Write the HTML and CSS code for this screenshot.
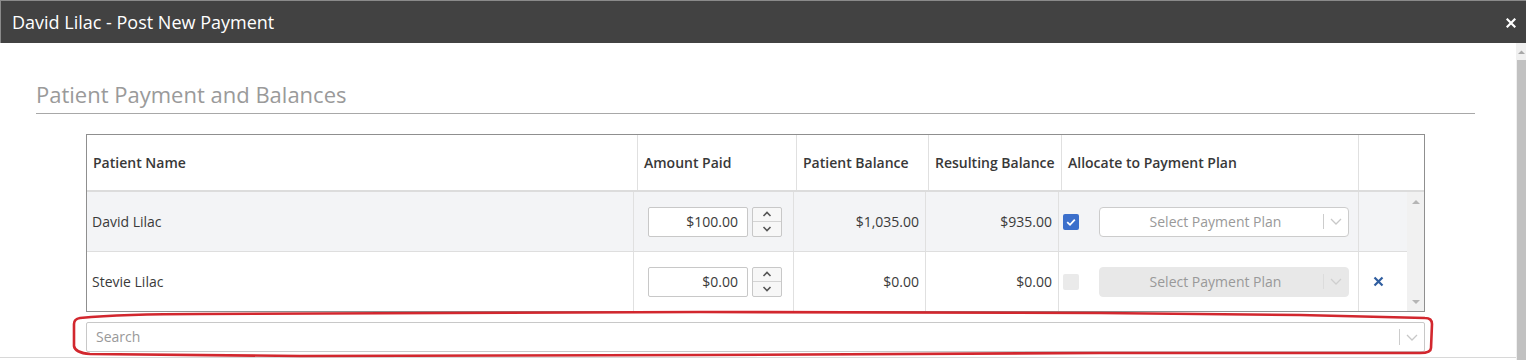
FILE: index.html
```html
<!DOCTYPE html>
<html>
<head>
<meta charset="utf-8">
<link rel="stylesheet" href="styles.css">
</head>
<body>
<div class="dialog">
  <div class="titlebar">
    <span class="title">David Lilac - Post New Payment</span>
    <svg class="close" width="10" height="10" viewBox="0 0 10 10"><path d="M1.5 1.5 L8.5 8.5 M8.5 1.5 L1.5 8.5" stroke="#fff" stroke-width="2.2" stroke-linecap="square"/></svg>
  </div>
  <div class="body-wrap">
    <div class="content">
      <h2 class="section-title">Patient Payment and Balances</h2>
      <div class="section">
        <div class="grid-table">
          <div class="thead">
            <div class="th">Patient Name</div>
            <div class="th">Amount Paid</div>
            <div class="th">Patient Balance</div>
            <div class="th">Resulting Balance</div>
            <div class="th">Allocate to Payment Plan</div>
            <div class="th last"></div>
          </div>
          <div class="tbody">
            <div class="rows">
              <div class="tr alt">
                <div class="td">David Lilac</div>
                <div class="td amount">
                  <div class="num-input">$100.00</div>
                  <div class="spinner">
                    <div class="spin-btn"><svg width="10" height="6" viewBox="0 0 10 6"><path d="M1.5 5 L5 1.5 L8.5 5" fill="none" stroke="#555" stroke-width="1.6"/></svg></div>
                    <div class="spin-btn"><svg width="10" height="6" viewBox="0 0 10 6"><path d="M1.5 1 L5 4.5 L8.5 1" fill="none" stroke="#555" stroke-width="1.6"/></svg></div>
                  </div>
                </div>
                <div class="td money">$1,035.00</div>
                <div class="td money">$935.00</div>
                <div class="td allocate">
                  <div class="checkbox checked"><svg width="16" height="16" viewBox="0 0 16 16"><path d="M4.2 8.2 L7 10.8 L11.8 5.6" fill="none" stroke="#fff" stroke-width="1.8"/></svg></div>
                  <div class="select">
                    <span class="select-label">Select Payment Plan</span>
                    <span class="sep"></span>
                    <span class="chev"><svg width="12" height="7" viewBox="0 0 12 7"><path d="M1 1 L6 6 L11 1" fill="none" stroke="#c8c8c8" stroke-width="1.3"/></svg></span>
                  </div>
                </div>
                <div class="td last"></div>
              </div>
              <div class="tr">
                <div class="td">Stevie Lilac</div>
                <div class="td amount">
                  <div class="num-input">$0.00</div>
                  <div class="spinner">
                    <div class="spin-btn"><svg width="10" height="6" viewBox="0 0 10 6"><path d="M1.5 5 L5 1.5 L8.5 5" fill="none" stroke="#555" stroke-width="1.6"/></svg></div>
                    <div class="spin-btn"><svg width="10" height="6" viewBox="0 0 10 6"><path d="M1.5 1 L5 4.5 L8.5 1" fill="none" stroke="#555" stroke-width="1.6"/></svg></div>
                  </div>
                </div>
                <div class="td money">$0.00</div>
                <div class="td money">$0.00</div>
                <div class="td allocate">
                  <div class="checkbox disabled"></div>
                  <div class="select disabled">
                    <span class="select-label">Select Payment Plan</span>
                    <span class="sep"></span>
                    <span class="chev"><svg width="12" height="7" viewBox="0 0 12 7"><path d="M1 1 L6 6 L11 1" fill="none" stroke="#cfcfcf" stroke-width="1.3"/></svg></span>
                  </div>
                </div>
                <div class="td last remove">
                  <svg width="11" height="11" viewBox="0 0 11 11"><path d="M1.5 1.5 L9.5 9.5 M9.5 1.5 L1.5 9.5" stroke="#2f5d9f" stroke-width="2.2"/></svg>
                </div>
              </div>
            </div>
            <div class="vscroll">
              <svg width="8" height="5" viewBox="0 0 8 5"><path d="M0 5 L4 1 L8 5 Z" fill="#b5b5b5"/></svg>
              <svg width="8" height="5" viewBox="0 0 8 5"><path d="M0 0 L4 4 L8 0 Z" fill="#b5b5b5"/></svg>
            </div>
          </div>
        </div>
        <div class="search-wrap">
          <div class="search">
            <span class="search-label">Search</span>
            <span class="sep"></span>
            <span class="chev"><svg width="12" height="7" viewBox="0 0 12 7"><path d="M1 1 L6 6 L11 1" fill="none" stroke="#c8c8c8" stroke-width="1.3"/></svg></span>
          </div>
          <svg class="marker" width="1364" height="48" viewBox="0 0 1364 48"><path d="M8 6 C40 3 100 2 128 2 L628 0 L1028 1 L1228 3 L1353 6 Q1360 6 1360 12 L1359 36 Q1359 41 1348 41 L1028 41 L628 43 L228 44 L18 42 Q3 41 2 34 L2 12 Q2 7 8 6 Z" fill="none" stroke="#d2272e" stroke-width="2.6" stroke-linejoin="round"/></svg>
        </div>
      </div>
      <div class="footer-line"></div>
    </div>
    <div class="page-scroll">
      <div class="ps-arrow"><svg width="7" height="4" viewBox="0 0 7 4"><path d="M0 4 L3.5 0.5 L7 4 Z" fill="#a8a8a8"/></svg></div>
      <div class="ps-thumb"></div>
    </div>
  </div>
</div>
</body>
</html>
```

FILE: styles.css
```css
* { box-sizing: border-box; }
html, body { margin: 0; padding: 0; }
body {
  font-family: "Open Sans", "Liberation Sans", sans-serif;
  color: #333;
  background: #fff;
  width: 1526px;
  height: 360px;
  overflow: hidden;
}
.dialog {
  display: flex;
  flex-direction: column;
  height: 360px;
}
.titlebar {
  height: 43px;
  background: #424242;
  border-top: 1px solid #8a8a8a;
  border-left: 1px solid #8a8a8a;
  display: flex;
  align-items: center;
  justify-content: space-between;
  padding: 0 10px 0 11px;
}
.title {
  color: #fff;
  font-size: 18px;
  line-height: 42px;
}
.close { display: block; margin-top: 2px; }
.body-wrap {
  flex: 1;
  display: flex;
  min-height: 0;
}
.content {
  flex: 1;
  padding: 0 41px 0 36px;
  display: flex;
  flex-direction: column;
}
.section-title {
  margin: 37px 0 0 0;
  font-size: 22px;
  font-weight: 400;
  line-height: 29px;
  color: #9a9a9a;
  padding-bottom: 4px;
  border-bottom: 1px solid #a8a8a8;
}
.section {
  margin: 20px 50px 0 50px;
}
.grid-table {
  border: 1px solid #8f8f8f;
  border-bottom: 1px solid #8f8f8f;
}
.thead {
  display: grid;
  grid-template-columns: 551px 159px 132px 133px 297px 65px;
  height: 57px;
  border-bottom: 2px solid #dcdcdc;
}
.th {
  display: flex;
  align-items: center;
  padding: 0 6px;
  font-size: 14px;
  font-weight: 600;
  color: #383838;
  border-right: 1px solid #e0e0e0;
}
.th.last { border-right: none; }
.tbody {
  display: flex;
}
.rows { flex: 1; }
.tr {
  display: grid;
  grid-template-columns: 547px 160px 132px 133px 300px 48px;
  height: 60px;
  border-bottom: 1px solid #dedede;
  background: #fff;
}
.tr:last-child { border-bottom: none; height: 59px; }
.tr.alt { background: #f3f4f6; }
.td {
  display: flex;
  align-items: center;
  padding: 0 6px 1px 6px;
  font-size: 14px;
  color: #3a3a3a;
  border-right: 1px solid #e0e0e0;
}
.td:first-child { padding-left: 5px; }
.td.last { border-right: none; }
.td.money { justify-content: flex-end; }
.td.amount { padding: 0 0 0 14px; gap: 4px; }
.num-input {
  width: 100px;
  height: 30px;
  border: 1px solid #c8c8c8;
  border-radius: 2px;
  background: #fff;
  display: flex;
  align-items: center;
  justify-content: flex-end;
  padding: 0 9px 1px 0;
  font-size: 14px;
  color: #3a3a3a;
}
.spinner {
  width: 30px;
  height: 30px;
  border: 1px solid #c8c8c8;
  border-radius: 2px;
  background: #f7f7f7;
  display: flex;
  flex-direction: column;
}
.spin-btn {
  flex: 1;
  display: flex;
  align-items: center;
  justify-content: center;
}
.spin-btn + .spin-btn { border-top: 1px solid #d4d4d4; }
.spin-btn svg { display: block; }
.td.allocate { padding: 0 0 0 4px; gap: 20px; }
.checkbox {
  width: 16px;
  height: 16px;
  border-radius: 2px;
  flex: none;
}
.checkbox svg { display: block; }
.checkbox.checked { background: #3b6fcb; }
.checkbox.disabled { background: #eaeaea; }
.select {
  width: 250px;
  height: 30px;
  border: 1px solid #cccccc;
  border-radius: 4px;
  background: #fff;
  display: flex;
  align-items: center;
}
.select.disabled {
  background: #e8e8e8;
  border-color: #e8e8e8;
}
.select-label {
  flex: 1;
  text-align: center;
  font-size: 14px;
  color: #999;
  padding: 0 0 1px 8px;
}
.sep {
  width: 1px;
  height: 15px;
  background: #cccccc;
}
.select.disabled .sep { background: #dcdcdc; }
.chev {
  width: 24px;
  display: flex;
  justify-content: center;
  align-items: center;
}
.chev svg { display: block; }
.remove { justify-content: flex-start; padding: 0 0 0 14px; }
.remove svg { display: block; }
.vscroll {
  width: 17px;
  background: #f1f1f1;
  display: flex;
  flex-direction: column;
  justify-content: space-between;
  align-items: center;
  padding: 7px 0 6px 0;
}
.vscroll svg { display: block; }
.search-wrap {
  position: relative;
  margin-top: 10px;
}
.search {
  height: 30px;
  border: 1px solid #c8c8c8;
  border-radius: 2px;
  background: #fff;
  display: flex;
  align-items: center;
}
.search-label {
  flex: 1;
  padding: 0 0 1px 9px;
  font-size: 14px;
  color: #999;
}
.search .sep { height: 16px; }
.search .chev { width: 24px; }
.marker {
  position: absolute;
  left: -14px;
  top: -10px;
  overflow: visible;
  pointer-events: none;
}
.footer-line {
  margin-top: 5px;
  margin-left: -36px;
  margin-right: -41px;
  border-top: 1px solid #d8d8d8;
}
.page-scroll {
  width: 10px;
  background: #f0f0f0;
  display: flex;
  flex-direction: column;
}
.ps-arrow {
  height: 17px;
  display: flex;
  align-items: center;
  justify-content: center;
}
.ps-arrow svg { display: block; }
.ps-thumb {
  flex: 1;
  margin-left: 1px;
  background: #c1c1c1;
}
```
